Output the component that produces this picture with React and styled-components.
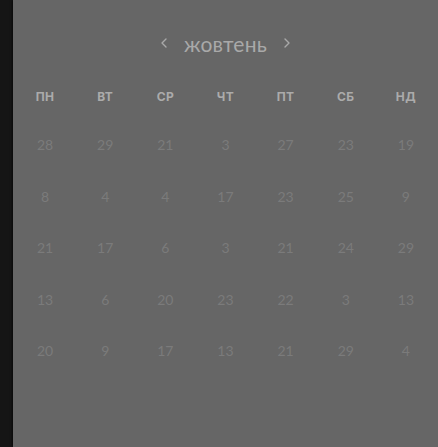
import React from "react";
import styled, { createGlobalStyle } from "styled-components";

const GlobalStyle = createGlobalStyle`
  html, body {
    margin: 0;
    padding: 0;
    background: #151515;
  }
  #root {
    min-height: 100vh;
  }
`;

const Page = styled.div`
  display: flex;
  min-height: 100vh;
  padding-left: 13px;
  box-sizing: border-box;
`;

const Panel = styled.div`
  flex: 1;
  background: #666666;
  box-shadow: -1px 0 2px rgba(0, 0, 0, 0.6);
  padding: 29px 2px 0;
  font-family: Lato, "Liberation Sans", sans-serif;
`;

const Header = styled.div`
  display: flex;
  align-items: center;
  justify-content: center;
  gap: 16px;
  height: 28px;
  color: #a9a9a9;
`;

const Title = styled.span`
  font-size: 21px;
  font-weight: 400;
  letter-spacing: 0.2px;
`;

const Arrow = styled.button`
  background: none;
  border: 0;
  padding: 0;
  display: flex;
  align-items: center;
  color: #a9a9a9;
  cursor: pointer;
`;

const Grid = styled.div`
  display: grid;
  grid-template-columns: repeat(7, 1fr);
`;

const WeekDays = styled(Grid)`
  margin-top: 31px;
  height: 16px;
  align-items: center;
`;

const WeekDay = styled.div`
  text-align: center;
  font-family: Inter, "Liberation Sans", sans-serif;
  font-size: 12px;
  font-weight: 700;
  color: #ababab;
  letter-spacing: 0.4px;
`;

const Days = styled(Grid)`
  margin-top: 33px;
  grid-auto-rows: 51.5px;
`;

const Day = styled.div`
  text-align: center;
  font-size: 14px;
  color: #7b7b7b;
  line-height: 16px;
`;

const Chevron = ({ dir }) => (
  <svg width="8" height="12" viewBox="0 0 8 12" fill="none">
    <path
      d={dir === "left" ? "M6 2 L2 6 L6 10" : "M2 2 L6 6 L2 10"}
      stroke="currentColor"
      strokeWidth="1.4"
      strokeLinecap="round"
      strokeLinejoin="round"
    />
  </svg>
);

const weekDays = ["ПН", "ВТ", "СР", "ЧТ", "ПТ", "СБ", "НД"];

const days = [
  28, 29, 21, 3, 27, 23, 19,
  8, 4, 4, 17, 23, 25, 9,
  21, 17, 6, 3, 21, 24, 29,
  13, 6, 20, 23, 22, 3, 13,
  20, 9, 17, 13, 21, 29, 4,
];

export default function App() {
  return (
    <>
      <GlobalStyle />
      <Page>
        <Panel>
          <Header>
            <Arrow>
              <Chevron dir="left" />
            </Arrow>
            <Title>жовтень</Title>
            <Arrow>
              <Chevron dir="right" />
            </Arrow>
          </Header>
          <WeekDays>
            {weekDays.map(d => (
              <WeekDay key={d}>{d}</WeekDay>
            ))}
          </WeekDays>
          <Days>
            {days.map((d, i) => (
              <Day key={i}>{d}</Day>
            ))}
          </Days>
        </Panel>
      </Page>
    </>
  );
}
